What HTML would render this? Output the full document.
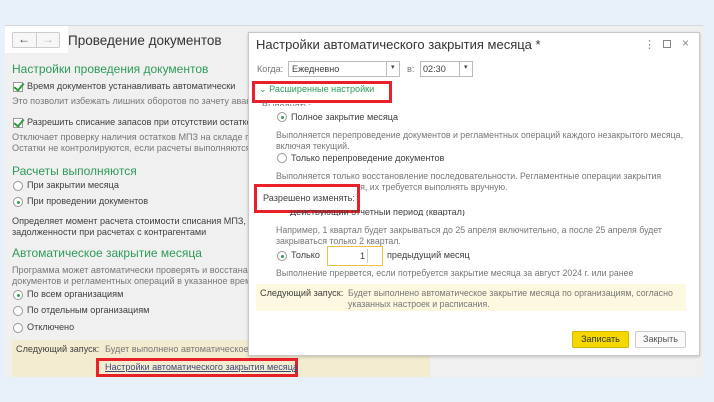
<!DOCTYPE html>
<html><head><meta charset="utf-8"><style>
*{margin:0;padding:0;box-sizing:border-box}
body{width:714px;height:402px;background:#e8f1fa;font-family:"Liberation Sans",sans-serif;font-size:9.1px;color:#404040;position:relative;overflow:hidden}
.a{position:absolute;white-space:nowrap}
.g{color:#777}
.d{font-size:8.8px}
.h{color:#2e9a5a;font-size:12px}
.panel{position:absolute;left:5px;top:25px;width:698px;height:352px;background:#f0f0f0;border-top:1px solid #d8d8d8}
.rad{position:absolute;width:10px;height:10px;border:1px solid #999;border-radius:50%;background:#fff}
.rad.on::after{content:"";position:absolute;left:2.5px;top:2.5px;width:3px;height:3px;border-radius:50%;background:#3a9a5a}
.chk{position:absolute;width:10px;height:10px;border:1px solid #999;background:#fff}
.chk::after{content:"";position:absolute;left:2px;top:-2px;width:4px;height:8px;border:solid #2e9a3a;border-width:0 2px 2px 0;transform:rotate(40deg)}
.red{position:absolute;border:3px solid #e8202a}
.dlg{position:absolute;left:248px;top:32px;width:452px;height:324px;background:#fff;border:1px solid #c8c8c8;box-shadow:0 1px 3px rgba(0,0,0,.2)}
</style></head><body>
<div class="panel"></div>
<div class="a" style="left:5px;top:26px;width:63px;height:27px;background:#fff"></div>
<div class="a" style="left:12px;top:32px;width:48px;height:16px;border:1px solid #ccc;border-radius:2px;background:#f7f7f7"></div>
<div class="a" style="left:36px;top:32px;width:1px;height:16px;background:#ccc"></div>
<div class="a" style="left:18px;top:32px;font-size:12px;color:#444">&#8592;</div>
<div class="a" style="left:42px;top:32px;font-size:12px;color:#bbb">&#8594;</div>
<div class="a" style="left:68px;top:33px;font-size:13.5px;color:#333">Проведение документов</div>

<div class="a h" style="left:12px;top:62px">Настройки проведения документов</div>
<div class="chk" style="left:13px;top:82px"></div>
<div class="a" style="left:27px;top:81px">Время документов устанавливать автоматически</div>
<div class="a g" style="left:12px;top:96px">Это позволит избежать лишних оборотов по зачету аванс</div>
<div class="chk" style="left:13px;top:118px"></div>
<div class="a" style="left:27px;top:117px">Разрешить списание запасов при отсутствии остатков</div>
<div class="a g" style="left:12px;top:132px">Отключает проверку наличия остатков МПЗ на складе пр</div>
<div class="a g" style="left:12px;top:143px">Остатки не контролируются, если расчеты выполняются п</div>
<div class="a h" style="left:12px;top:164px">Расчеты выполняются</div>
<div class="rad" style="left:13px;top:181px"></div>
<div class="a" style="left:27px;top:180px">При закрытии месяца</div>
<div class="rad on" style="left:13px;top:197px"></div>
<div class="a" style="left:27px;top:196px">При проведении документов</div>
<div class="a" style="left:12px;top:216px">Определяет момент расчета стоимости списания МПЗ, за</div>
<div class="a" style="left:12px;top:227px">задолженности при расчетах с контрагентами</div>
<div class="a h" style="left:12px;top:246px">Автоматическое закрытие месяца</div>
<div class="a g" style="left:12px;top:265px">Программа может автоматически проверять и восстанавл</div>
<div class="a g" style="left:12px;top:276px">документов и регламентных операций в указанное время</div>
<div class="rad on" style="left:13px;top:290px"></div>
<div class="a" style="left:27px;top:289px">По всем организациям</div>
<div class="rad" style="left:13px;top:306px"></div>
<div class="a" style="left:27px;top:305px">По отдельным организациям</div>
<div class="rad" style="left:13px;top:323px"></div>
<div class="a" style="left:27px;top:322px">Отключено</div>
<div class="a" style="left:12px;top:340px;width:418px;height:37px;background:#f3ecd0"></div>
<div class="a" style="left:16px;top:344px">Следующий запуск:</div>
<div class="a g" style="left:105px;top:344px">Будет выполнено автоматическое</div>
<div class="red" style="left:96px;top:358px;width:202px;height:19px"></div>
<div class="a" style="left:105px;top:362px;color:#3a4a7a;text-decoration:underline">Настройки автоматического закрытия месяца</div>

<div class="dlg"></div>
<div class="a" style="left:256px;top:37px;font-size:13px;color:#333">Настройки автоматического закрытия месяца *</div>
<div class="a" style="left:644px;top:38px;color:#888;font-size:11px">&#8942;</div>
<div class="a" style="left:663px;top:40px;width:8px;height:8px;border:1px solid #888"></div>
<div class="a" style="left:682px;top:36px;color:#888;font-size:12px">&#215;</div>
<div class="a g" style="left:257px;top:64px">Когда:</div>
<div class="a" style="left:288px;top:61px;width:112px;height:16px;border:1px solid #bbb"></div>
<div class="a" style="left:386px;top:61px;width:1px;height:16px;background:#bbb"></div>
<div class="a" style="left:292px;top:64px">Ежедневно</div>
<div class="a" style="left:391px;top:63px;font-size:7px">&#9662;</div>
<div class="a g" style="left:407px;top:64px">в:</div>
<div class="a" style="left:420px;top:61px;width:53px;height:16px;border:1px solid #bbb"></div>
<div class="a" style="left:459px;top:61px;width:1px;height:16px;background:#bbb"></div>
<div class="a" style="left:423px;top:64px">02:30</div>
<div class="a" style="left:464px;top:63px;font-size:7px">&#9662;</div>
<div class="red" style="left:252px;top:81px;width:140px;height:22px"></div>
<div class="a" style="left:259px;top:84px;color:#2e9a5a">&#8964; Расширенные настройки</div>
<div class="a g" style="left:262px;top:101px;height:5px;overflow:hidden">Выполнять:</div>
<div class="rad on" style="left:277px;top:112px"></div>
<div class="a" style="left:291px;top:112px">Полное закрытие месяца</div>
<div class="a g d" style="left:276px;top:130px">Выполняется перепроведение документов и регламентных операций каждого незакрытого месяца,</div>
<div class="a g d" style="left:276px;top:141px">включая текущий.</div>
<div class="rad" style="left:277px;top:153px"></div>
<div class="a" style="left:291px;top:153px">Только перепроведение документов</div>
<div class="a g d" style="left:276px;top:171px">Выполняется только восстановление последовательности. Регламентные операции закрытия</div>
<div class="a g d" style="left:276px;top:182px">месяца пропускаются, их требуется выполнять вручную.</div>
<div class="red" style="left:254px;top:184px;width:106px;height:29px;background:#fff"></div>
<div class="a" style="left:263px;top:193px">Разрешено изменять:</div>
<div class="a" style="left:290px;top:210px;height:6px;overflow:hidden;line-height:4px">Действующий отчетный период (квартал)</div>
<div class="a g d" style="left:276px;top:225px">Например, 1 квартал будет закрываться до 25 апреля включительно, а после 25 апреля будет</div>
<div class="a g d" style="left:276px;top:236px">закрываться только 2 квартал.</div>
<div class="rad on" style="left:277px;top:251px"></div>
<div class="a" style="left:291px;top:250px">Только</div>
<div class="a" style="left:327px;top:246px;width:56px;height:20px;border:1.5px solid #f0c040;background:#fff"></div>
<div class="a" style="left:367px;top:249px;width:1px;height:14px;background:#ccc"></div>
<div class="a" style="left:360px;top:251px">1</div>
<div class="a" style="left:387px;top:250px">предыдущий месяц</div>
<div class="a g d" style="left:276px;top:268px">Выполнение прервется, если потребуется закрытие месяца за август 2024 г. или ранее</div>
<div class="a" style="left:256px;top:284px;width:430px;height:27px;background:#fdf8e0"></div>
<div class="a" style="left:260px;top:288px">Следующий запуск:</div>
<div class="a g d" style="left:348px;top:288px">Будет выполнено автоматическое закрытие месяца по организациям, согласно</div>
<div class="a g d" style="left:348px;top:299px">указанных настроек и расписания.</div>
<div class="a" style="left:572px;top:331px;width:57px;height:17px;background:#f5d800;border:1px solid #d4b800;border-radius:2px;text-align:center;line-height:15px;color:#333">Записать</div>
<div class="a" style="left:635px;top:331px;width:51px;height:17px;background:#fafafa;border:1px solid #ccc;border-radius:2px;text-align:center;line-height:15px;color:#555">Закрыть</div>
</body></html>
